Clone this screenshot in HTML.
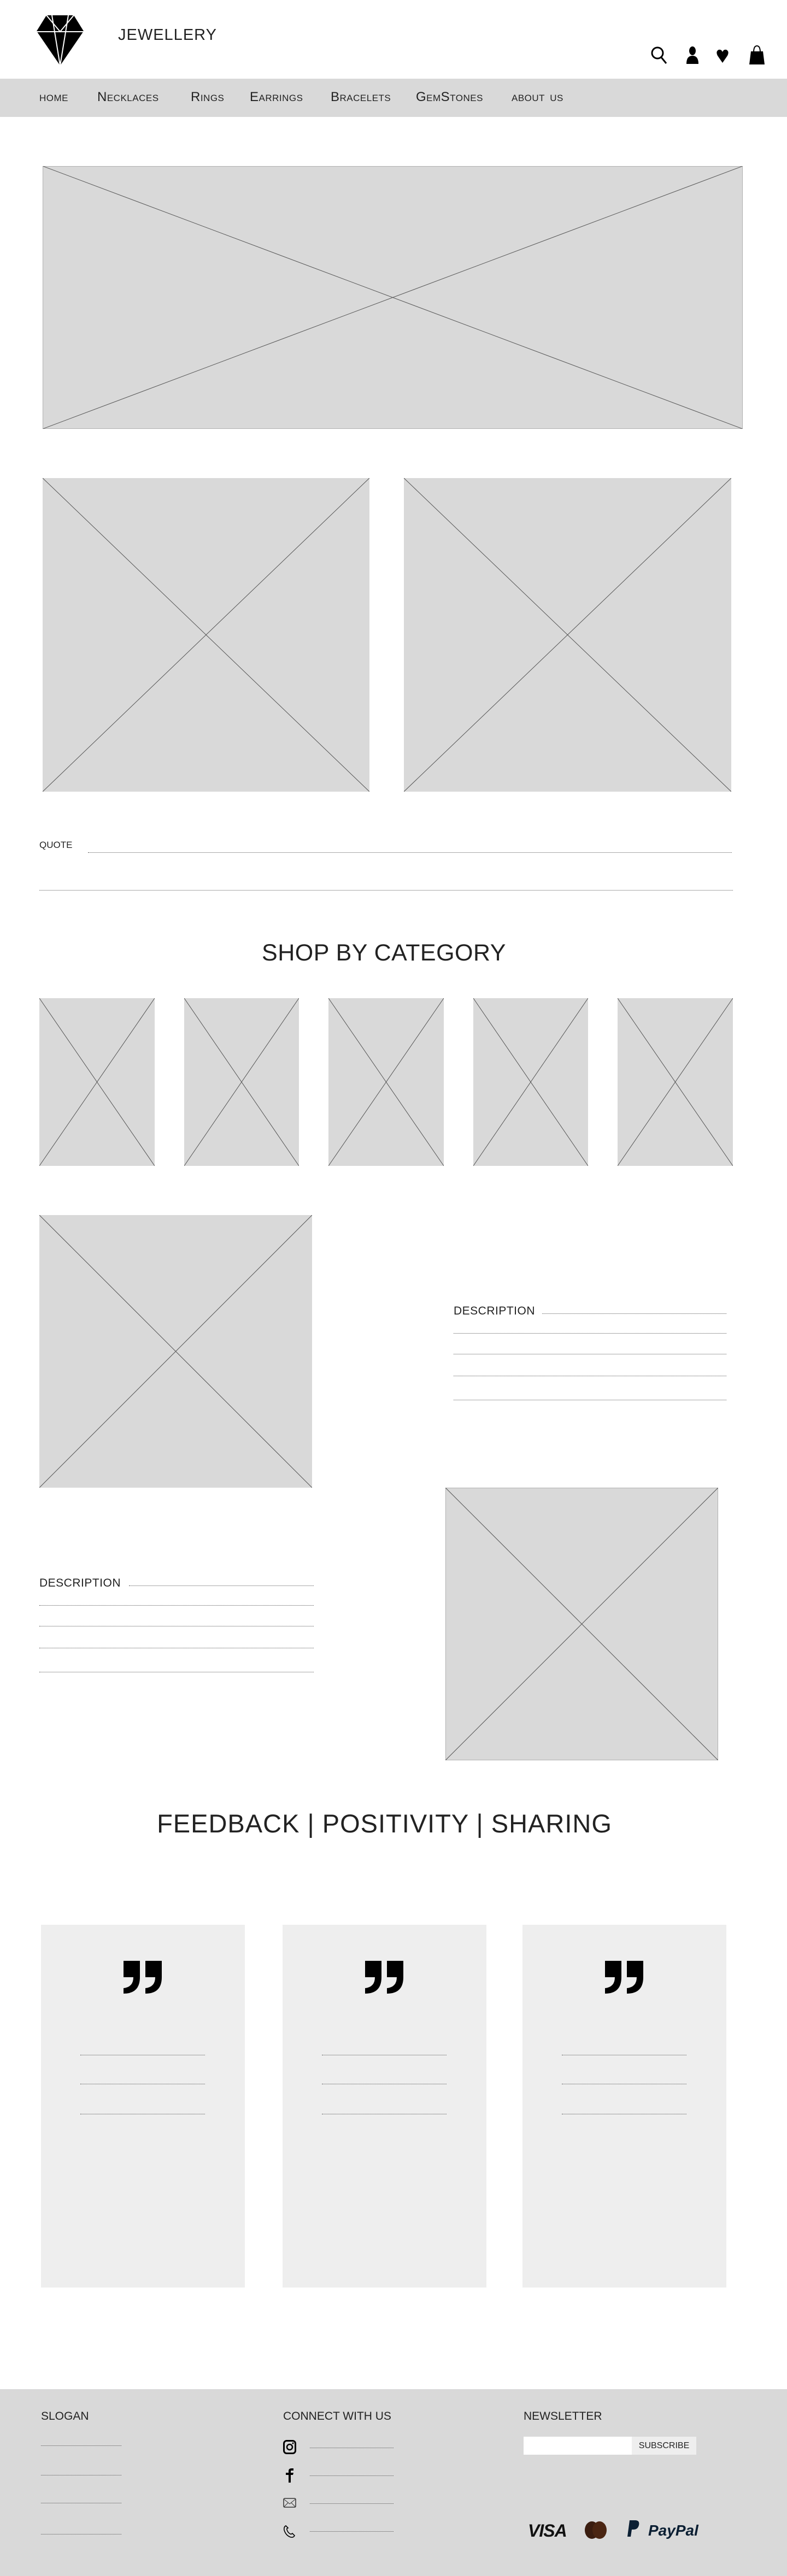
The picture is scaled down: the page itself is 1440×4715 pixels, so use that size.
<!DOCTYPE html>
<html><head><meta charset="utf-8"><style>
*{margin:0;padding:0;box-sizing:border-box}
body{width:1440px;height:4715px;position:relative;background:#fff;font-family:"Liberation Sans",sans-serif;color:#222;overflow:hidden}
.a{position:absolute}
.x{position:absolute;background:#d9d9d9}
.x svg{width:100%;height:100%;display:block}
.l{position:absolute;border-top:1px dotted #555;height:0}
.t{position:absolute;font-weight:300;white-space:nowrap}
</style></head><body>
<!-- header -->
<svg class="a" style="left:67px;top:28px" width="86" height="92" viewBox="0 0 86 92">
<polygon points="18,0 68,0 86,29 43,92 0,29" fill="#000"/>
<polyline points="0,30 86,30" stroke="#fff" stroke-width="2" fill="none"/>
<polyline points="18,0 43,30 68,0" stroke="#fff" stroke-width="2" fill="none"/>
<polyline points="28,0 43,92 58,0" stroke="#fff" stroke-width="2" fill="none"/>
</svg>
<div class="t" style="left:216px;top:48px;font-size:29px;letter-spacing:1px">JEWELLERY</div>
<svg class="a" style="left:1190px;top:82px" width="212" height="36" viewBox="0 0 212 36">
<circle cx="13" cy="15" r="10" stroke="#000" stroke-width="3" fill="none"/><line x1="20" y1="23" x2="29" y2="34" stroke="#000" stroke-width="3"/>
<ellipse cx="77" cy="11" rx="6" ry="8" fill="#000"/><path d="M66 35 Q66 20 77 20 Q88 20 88 35Z" fill="#000"/>
<path d="M132 33 L123 20 Q119 12 125 9 Q130 8 132 13 Q134 8 139 9 Q145 12 141 20Z" fill="#000"/>
<path d="M184 12 L206 12 L209 36 L181 36Z" fill="#000"/><path d="M189 14 Q189 2 195 2 Q201 2 201 14" stroke="#000" stroke-width="2" fill="none"/>
</svg>
<div class="a" style="left:0;top:144px;width:1440px;height:70px;background:#d9d9d9"></div>
<div class="t" style="left:72px;top:164px;font-size:24px;font-variant:small-caps;letter-spacing:0.5px;word-spacing:2px">
<span style="position:absolute;left:0">home</span><span style="position:absolute;left:106px">Necklaces</span><span style="position:absolute;left:277px">Rings</span><span style="position:absolute;left:385px">Earrings</span><span style="position:absolute;left:533px">Bracelets</span><span style="position:absolute;left:689px">GemStones</span><span style="position:absolute;left:864px">about us</span></div>
<!-- hero -->
<div class="x" style="left:78px;top:304px;width:1281px;height:481px"><svg viewBox="0 0 100 100" preserveAspectRatio="none"><line x1="0" y1="0" x2="100" y2="100" stroke="#555" stroke-width="1" vector-effect="non-scaling-stroke"/><line x1="100" y1="0" x2="0" y2="100" stroke="#555" stroke-width="1" vector-effect="non-scaling-stroke"/><rect x="0" y="0" width="100" height="100" fill="none" stroke="#888" vector-effect="non-scaling-stroke"/></svg></div>
<div class="x" style="left:78px;top:875px;width:598px;height:574px"><svg viewBox="0 0 100 100" preserveAspectRatio="none"><line x1="0" y1="0" x2="100" y2="100" stroke="#555" vector-effect="non-scaling-stroke"/><line x1="100" y1="0" x2="0" y2="100" stroke="#555" vector-effect="non-scaling-stroke"/></svg></div>
<div class="x" style="left:739px;top:875px;width:599px;height:574px"><svg viewBox="0 0 100 100" preserveAspectRatio="none"><line x1="0" y1="0" x2="100" y2="100" stroke="#555" vector-effect="non-scaling-stroke"/><line x1="100" y1="0" x2="0" y2="100" stroke="#555" vector-effect="non-scaling-stroke"/></svg></div>
<!-- quote -->
<div class="t" style="left:72px;top:1537px;font-size:17px">QUOTE</div>
<div class="l" style="left:161px;top:1560px;width:1178px"></div>
<div class="l" style="left:72px;top:1629px;width:1269px"></div>
<div class="t" style="left:475px;width:455px;text-align:center;top:1720px;font-size:43px;letter-spacing:0.5px">SHOP BY CATEGORY</div>
<!-- categories -->
<div class="x" style="left:72px;top:1827px;width:211px;height:307px"><svg viewBox="0 0 100 100" preserveAspectRatio="none"><line x1="0" y1="0" x2="100" y2="100" stroke="#555" vector-effect="non-scaling-stroke"/><line x1="100" y1="0" x2="0" y2="100" stroke="#555" vector-effect="non-scaling-stroke"/></svg></div>
<div class="x" style="left:337px;top:1827px;width:210px;height:307px"><svg viewBox="0 0 100 100" preserveAspectRatio="none"><line x1="0" y1="0" x2="100" y2="100" stroke="#555" vector-effect="non-scaling-stroke"/><line x1="100" y1="0" x2="0" y2="100" stroke="#555" vector-effect="non-scaling-stroke"/></svg></div>
<div class="x" style="left:601px;top:1827px;width:211px;height:307px"><svg viewBox="0 0 100 100" preserveAspectRatio="none"><line x1="0" y1="0" x2="100" y2="100" stroke="#555" vector-effect="non-scaling-stroke"/><line x1="100" y1="0" x2="0" y2="100" stroke="#555" vector-effect="non-scaling-stroke"/></svg></div>
<div class="x" style="left:866px;top:1827px;width:210px;height:307px"><svg viewBox="0 0 100 100" preserveAspectRatio="none"><line x1="0" y1="0" x2="100" y2="100" stroke="#555" vector-effect="non-scaling-stroke"/><line x1="100" y1="0" x2="0" y2="100" stroke="#555" vector-effect="non-scaling-stroke"/></svg></div>
<div class="x" style="left:1130px;top:1827px;width:211px;height:307px"><svg viewBox="0 0 100 100" preserveAspectRatio="none"><line x1="0" y1="0" x2="100" y2="100" stroke="#555" vector-effect="non-scaling-stroke"/><line x1="100" y1="0" x2="0" y2="100" stroke="#555" vector-effect="non-scaling-stroke"/></svg></div>
<!-- features -->
<div class="x" style="left:72px;top:2224px;width:499px;height:499px"><svg viewBox="0 0 100 100" preserveAspectRatio="none"><line x1="0" y1="0" x2="100" y2="100" stroke="#555" vector-effect="non-scaling-stroke"/><line x1="100" y1="0" x2="0" y2="100" stroke="#555" vector-effect="non-scaling-stroke"/></svg></div>
<div class="t" style="left:830px;top:2388px;font-size:21px;letter-spacing:0.5px">DESCRIPTION</div>
<div class="l" style="left:992px;top:2404px;width:337px"></div>
<div class="l" style="left:830px;top:2440px;width:499px"></div>
<div class="l" style="left:830px;top:2478px;width:499px"></div>
<div class="l" style="left:830px;top:2518px;width:499px"></div>
<div class="l" style="left:830px;top:2562px;width:499px"></div>
<div class="x" style="left:815px;top:2723px;width:499px;height:499px"><svg viewBox="0 0 100 100" preserveAspectRatio="none"><line x1="0" y1="0" x2="100" y2="100" stroke="#555" vector-effect="non-scaling-stroke"/><line x1="100" y1="0" x2="0" y2="100" stroke="#555" vector-effect="non-scaling-stroke"/><rect x="0" y="0" width="100" height="100" fill="none" stroke="#888" vector-effect="non-scaling-stroke"/></svg></div>
<div class="t" style="left:72px;top:2886px;font-size:21px;letter-spacing:0.5px">DESCRIPTION</div>
<div class="l" style="left:236px;top:2902px;width:338px"></div>
<div class="l" style="left:72px;top:2938px;width:502px"></div>
<div class="l" style="left:72px;top:2976px;width:502px"></div>
<div class="l" style="left:72px;top:3016px;width:502px"></div>
<div class="l" style="left:72px;top:3060px;width:502px"></div>
<div class="t" style="left:274px;width:859px;text-align:center;top:3310px;font-size:47px;letter-spacing:1px">FEEDBACK | POSITIVITY | SHARING</div>
<!-- cards -->
<div class="a" style="left:75px;top:3523px;width:373px;height:664px;background:#eee"></div>
<div class="a" style="left:517px;top:3523px;width:373px;height:664px;background:#eee"></div>
<div class="a" style="left:956px;top:3523px;width:373px;height:664px;background:#eee"></div>
<svg class="a" style="left:226px;top:3589px" width="72" height="62" viewBox="0 0 72 62"><path d="M0 0H30V30Q30 60 0 60V50Q18 48 18 30H0Z M40 0H70V30Q70 60 40 60V50Q58 48 58 30H40Z" fill="#000"/></svg>
<svg class="a" style="left:668px;top:3589px" width="72" height="62" viewBox="0 0 72 62"><path d="M0 0H30V30Q30 60 0 60V50Q18 48 18 30H0Z M40 0H70V30Q70 60 40 60V50Q58 48 58 30H40Z" fill="#000"/></svg>
<svg class="a" style="left:1107px;top:3589px" width="72" height="62" viewBox="0 0 72 62"><path d="M0 0H30V30Q30 60 0 60V50Q18 48 18 30H0Z M40 0H70V30Q70 60 40 60V50Q58 48 58 30H40Z" fill="#000"/></svg>
<div class="l" style="left:147px;top:3761px;width:228px"></div><div class="l" style="left:147px;top:3814px;width:228px"></div><div class="l" style="left:147px;top:3869px;width:228px"></div>
<div class="l" style="left:589px;top:3761px;width:228px"></div><div class="l" style="left:589px;top:3814px;width:228px"></div><div class="l" style="left:589px;top:3869px;width:228px"></div>
<div class="l" style="left:1028px;top:3761px;width:228px"></div><div class="l" style="left:1028px;top:3814px;width:228px"></div><div class="l" style="left:1028px;top:3869px;width:228px"></div>
<!-- footer -->
<div class="a" style="left:0;top:4373px;width:1440px;height:342px;background:#d9d9d9"></div>
<div class="t" style="left:75px;top:4411px;font-size:21px">SLOGAN</div>
<div class="t" style="left:518px;top:4411px;font-size:21px">CONNECT WITH US</div>
<div class="t" style="left:958px;top:4411px;font-size:21px">NEWSLETTER</div>
<div class="l" style="left:75px;top:4476px;width:147px"></div>
<div class="l" style="left:75px;top:4530px;width:147px"></div>
<div class="l" style="left:75px;top:4581px;width:147px"></div>
<div class="l" style="left:75px;top:4638px;width:147px"></div>
<svg class="a" style="left:518px;top:4466px" width="24" height="26" viewBox="0 0 24 26"><rect x="1.5" y="1.5" width="21" height="23" rx="5" stroke="#000" stroke-width="3" fill="none"/><circle cx="12" cy="13" r="5" stroke="#000" stroke-width="2.5" fill="none"/><circle cx="18" cy="6" r="1.5"/></svg>
<svg class="a" style="left:520px;top:4517px" width="20" height="27" viewBox="0 0 20 27"><path d="M8 27V13H3V9H8V6Q8 1 13 1H17V5H13Q12 5 12 7V9H17L16 13H12V27Z" fill="#000"/></svg>
<svg class="a" style="left:518px;top:4572px" width="24" height="18" viewBox="0 0 24 18"><rect x="1" y="1" width="22" height="16" rx="2" stroke="#333" stroke-width="1.5" fill="none"/><path d="M1 2L12 11L23 2M1 17L9 9M23 17L15 9" stroke="#333" stroke-width="1" fill="none"/></svg>
<svg class="a" style="left:518px;top:4621px" width="24" height="24" viewBox="0 0 24 24"><path d="M5 2Q1 4 2 10Q5 20 14 23Q19 24 21 20L17 16Q15 18 13 17Q8 14 7 9Q6 7 9 6L5 2Z" stroke="#000" stroke-width="1.6" fill="none"/></svg>
<div class="l" style="left:567px;top:4480px;width:153px"></div>
<div class="l" style="left:567px;top:4531px;width:153px"></div>
<div class="l" style="left:567px;top:4582px;width:153px"></div>
<div class="l" style="left:567px;top:4633px;width:153px"></div>
<div class="a" style="left:958px;top:4460px;width:198px;height:33px;background:#fff"></div>
<div class="a" style="left:1156px;top:4460px;width:118px;height:33px;background:#eee;font-size:16px;font-weight:300;text-align:center;line-height:33px">SUBSCRIBE</div>
<div class="t" style="left:966px;top:4614px;font-size:32px;font-weight:bold;font-style:italic;color:#111;letter-spacing:-1px">VISA</div>
<div class="a" style="left:1070px;top:4615px;width:26px;height:32px;border-radius:50%;background:#3a1d10"></div>
<div class="a" style="left:1084px;top:4615px;width:26px;height:32px;border-radius:50%;background:#4a2512"></div>
<svg class="a" style="left:1148px;top:4613px" width="24" height="34" viewBox="0 0 24 34"><path d="M4 0H14Q23 0 21 9Q19 17 11 17H8L6 30H0Z" fill="#0b1f33"/></svg>
<div class="t" style="left:1186px;top:4616px;font-size:28px;font-weight:bold;font-style:italic;color:#0b1f33">PayPal</div>
</body></html>
